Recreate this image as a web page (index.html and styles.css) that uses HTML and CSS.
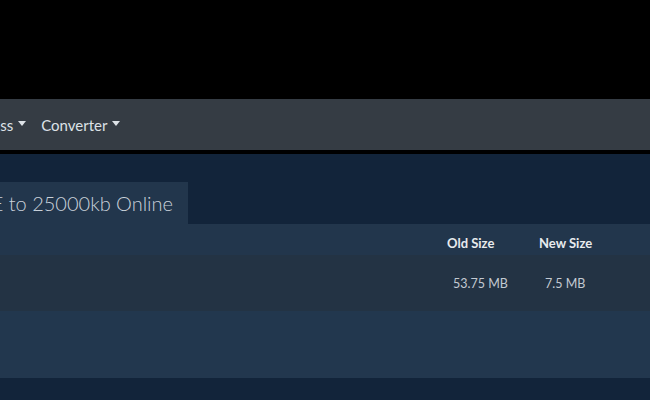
FILE: index.html
```html
<!DOCTYPE html>
<html lang="en">
<head>
<meta charset="utf-8">
<title>Compress</title>
<link rel="stylesheet" href="styles.css">
</head>
<body>
<div class="topbar"></div>
<nav class="navbar">
  <ul class="nav-list">
    <li class="nav-item"><span class="nav-link">Compress</span><span class="caret"></span></li>
    <li class="nav-item"><span class="nav-link">Converter</span><span class="caret"></span></li>
  </ul>
</nav>
<main class="main">
  <div class="tab"><h1 class="tab-title">Compress FILE to 25000kb Online</h1></div>
  <div class="table">
    <div class="row row-head">
      <div class="cell"></div>
      <div class="cell th">Old Size</div>
      <div class="cell th">New Size</div>
    </div>
    <div class="row row-one">
      <div class="cell"></div>
      <div class="cell td">53.75 MB</div>
      <div class="cell td">7.5 MB</div>
    </div>
    <div class="row row-two">
      <div class="cell"></div>
      <div class="cell"></div>
      <div class="cell"></div>
    </div>
  </div>
</main>
</body>
</html>
```
FILE: styles.css
```css
* { box-sizing: border-box; }
html, body { margin: 0; padding: 0; }
body {
  background: #12243a;
  font-family: Lato, "Open Sans", sans-serif;
  overflow: hidden;
}
.topbar { height: 99px; background: #000; }
.navbar {
  height: 55px;
  background: #353c44;
  border-bottom: 4px solid #000;
  display: flex;
  align-items: center;
  overflow: hidden;
}
.nav-list {
  list-style: none;
  margin: 0 0 0 -52px;
  padding: 0;
  display: flex;
  gap: 15px;
}
.nav-item {
  display: flex;
  align-items: center;
  gap: 5px;
  color: #dde2e7;
  font-size: 15px;
  white-space: nowrap;
}
.caret {
  width: 0;
  height: 0;
  border-left: 4px solid transparent;
  border-right: 4px solid transparent;
  border-top: 5px solid #dde2e7;
  margin-top: -3px;
}
.main { padding-top: 28px; }
.tab {
  width: 188px;
  height: 42px;
  background: #22364c;
  display: flex;
  justify-content: flex-end;
  align-items: center;
  padding-right: 15px;
}
.tab-title {
  margin: 0;
  font-size: 20px;
  font-weight: 300;
  color: #c9d1da;
  white-space: nowrap;
}
.row {
  display: grid;
  grid-template-columns: 447px 92px 1fr;
  align-items: center;
}
.row-head { height: 31px; background: #22364c; padding-top: 7px; }
.row-one { height: 56px; background: #233344; }
.row-two { height: 67px; background: #22374e; }
.th {
  font-size: 13px;
  font-weight: 700;
  color: #e8ebee;
}
.td {
  padding-left: 6px;
  font-size: 12.5px;
  color: #c3cad2;
}
```
